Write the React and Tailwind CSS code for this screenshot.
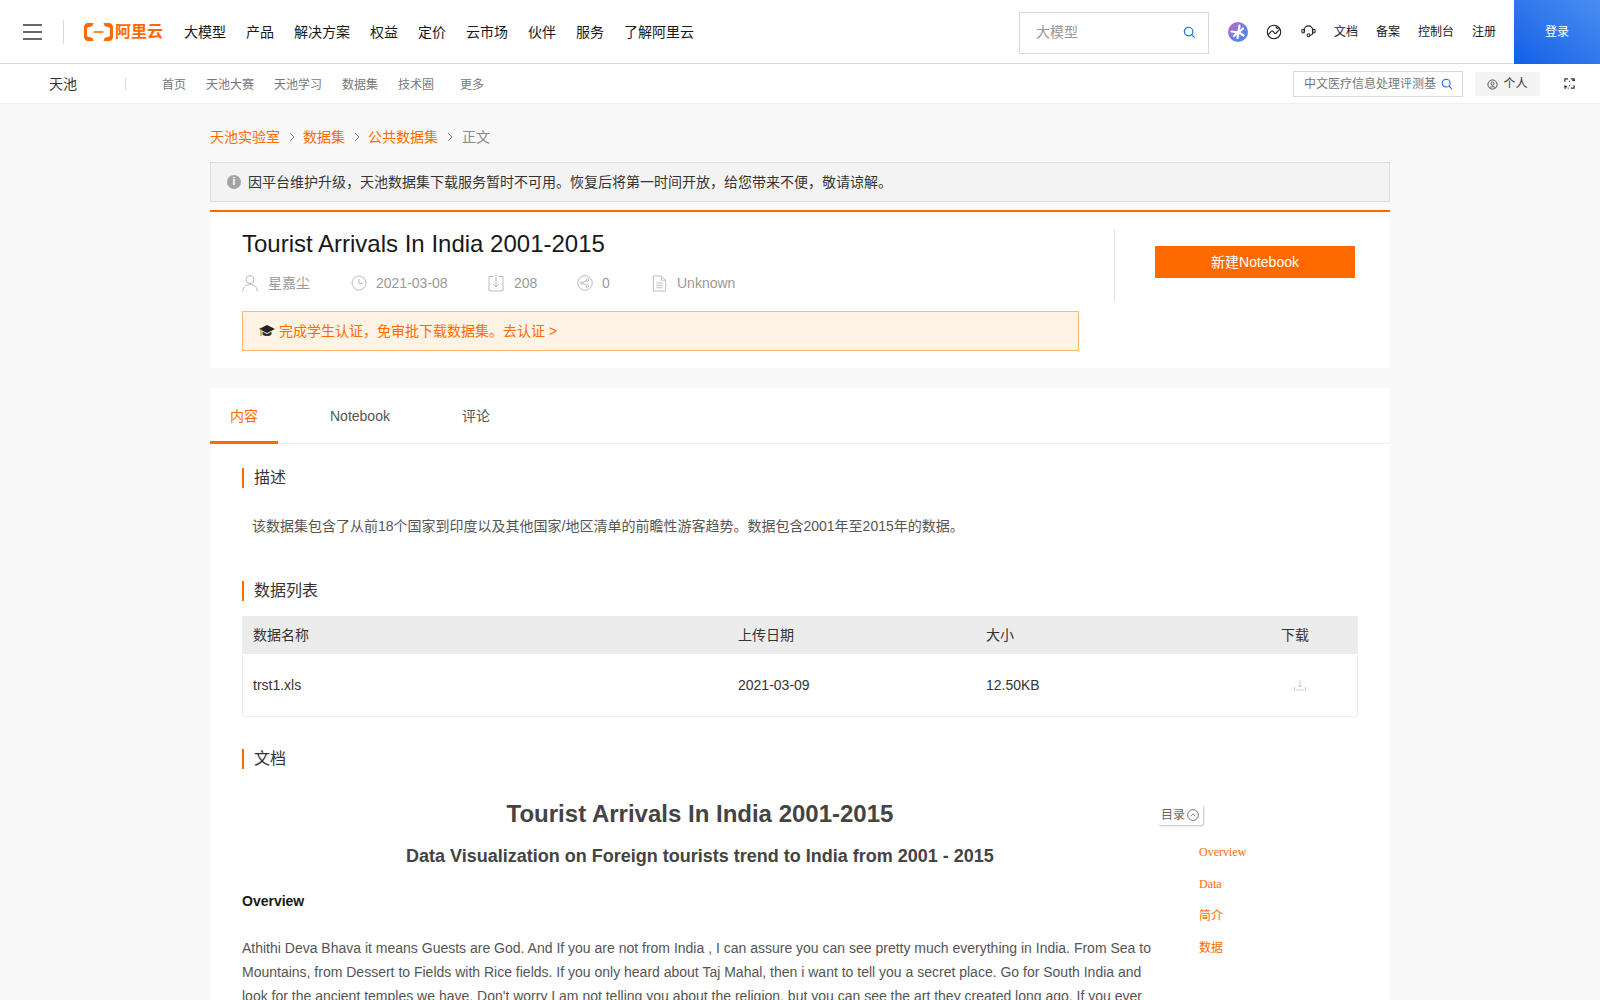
import React from 'react';

const mainNav = ['大模型', '产品', '解决方案', '权益', '定价', '云市场', '伙伴', '服务', '了解阿里云'];
const subNav = [
  ['首页', 'mr-[20px]'],
  ['天池大赛', 'mr-[20px]'],
  ['天池学习', 'mr-[20px]'],
  ['数据集', 'mr-[20px]'],
  ['技术圈', 'mr-[26px]'],
  ['更多', ''],
];
const toc = ['Overview', 'Data', '简介', '数据'];

function Search({ className }) {
  return (
    <svg viewBox="0 0 14 14" fill="none" stroke="#1366ec" strokeWidth="1.2" className={className}>
      <circle cx="6" cy="6" r="4.6" />
      <path d="M9.4 9.4 12.6 12.6" />
    </svg>
  );
}

function Chevron() {
  return (
    <svg viewBox="0 0 8 10" fill="none" stroke="#888" strokeWidth="1" className="w-[8px] h-[10px] mx-[7.5px]">
      <path d="M2 1 6 5 2 9" />
    </svg>
  );
}

function Heading({ children }) {
  return (
    <div className="flex items-center h-[20px] border-l-2 border-[#ff6a00] pl-[10px] text-[16px] leading-[20px] text-[#333]">
      {children}
    </div>
  );
}

function Logo() {
  return (
    <div className="flex items-center text-[#ff6a00]">
      <svg viewBox="0 0 29 18" className="w-[29px] h-[18px]" fill="#ff6a00">
        <path d="M9.5 0H4C1.8 0 0 1.8 0 4v10c0 2.2 1.8 4 4 4h5.500l-1.300-3.200-4-1c-.7-.2-1.200-.8-1.200-1.500V5.700c0-.7.5-1.300 1.200-1.500l4-1z" />
        <path d="M19.500 0H25c2.200 0 4 1.800 4 4v10c0 2.200-1.800 4-4 4h-5.500l1.300-3.200 4-1c.7-.2 1.200-.8 1.200-1.500V5.700c0-.7-.5-1.300-1.200-1.500l-4-1z" />
        <rect x="9.800" y="8.200" width="9.400" height="1.600" />
      </svg>
      <span className="ml-[2px] text-[16px] leading-[20px] font-bold">阿里云</span>
    </div>
  );
}

function TopBar() {
  return (
    <header className="flex items-center h-[64px] bg-white border-b border-[#d8d8d8]">
      <div className="flex flex-col justify-between w-[19px] h-[16px] ml-[23px]">
        <span className="h-[2px] bg-[#666]" />
        <span className="h-[2px] bg-[#666]" />
        <span className="h-[2px] bg-[#666]" />
      </div>
      <span className="w-px h-[24px] ml-[21px] bg-[#d8d8d8]" />
      <div className="ml-[20px]">
        <Logo />
      </div>
      <nav className="flex items-center mt-px ml-[21px] gap-[20px] text-[14px] text-[#181818]">
        {mainNav.map((n) => (
          <span key={n}>{n}</span>
        ))}
      </nav>
      <div className="flex items-center justify-between w-[190px] h-[42px] mt-[2px] ml-auto pl-[16px] pr-[12px] border border-[#d8d8d8] text-[14px] text-[#999]">
        <span>大模型</span>
        <Search className="w-[13px] h-[13px]" />
      </div>
      <span className="flex items-center justify-center w-[20px] h-[20px] ml-[19px] rounded-full bg-gradient-to-br from-[#c55fb8] via-[#6f7de6] to-[#3f8cf0]">
        <svg viewBox="0 0 20 20" className="w-[20px] h-[20px]" fill="none" stroke="#fff" strokeWidth="2.200" strokeLinecap="round">
          <path d="M11.500 3.500 9.500 16M3.500 9.500 11 10.500M11 10.500l4.500 3M11 10l4-3.500M9 11l-3 3" />
        </svg>
      </span>
      <svg viewBox="0 0 16 16" fill="none" stroke="#222" strokeWidth="1.100" className="w-[16px] h-[16px] ml-[18px]">
        <circle cx="8" cy="8" r="6.700" />
        <path d="M2 10.500c2-.5 2.500-4 4.500-3.500s1 3 3 2.500 2-3.500 4.500-4M10 2.500c0 1.500 1 2 2.500 2" />
      </svg>
      <svg viewBox="0 0 16 16" fill="none" stroke="#222" strokeWidth="1.100" className="w-[15px] h-[15px] ml-[19px]">
        <path d="M3.500 9V6.500a4.500 4.500 0 0 1 9 0V9c0 2-1.500 3-3.500 3" />
        <rect x="1" y="5.500" width="2.500" height="4" rx="1" />
        <rect x="12.500" y="5.500" width="2.500" height="4" rx="1" />
        <circle cx="8" cy="12" r="1.500" />
      </svg>
      <div className="flex items-center mt-px ml-[18px] gap-[18px] text-[12px] text-[#181818]">
        <span>文档</span>
        <span>备案</span>
        <span>控制台</span>
        <span>注册</span>
      </div>
      <div className="flex items-center justify-center self-stretch w-[86px] ml-[18px] -mb-px bg-gradient-to-tr from-[#0f5fe6] to-[#4b8df0] text-[12px] text-white">
        登录
      </div>
    </header>
  );
}

function SubBar() {
  return (
    <div className="flex items-center h-[40px] bg-white border-b border-[#eeeeee]">
      <span className="mt-px ml-[49px] text-[14px] text-[#333]">天池</span>
      <span className="w-px h-[12px] ml-[48px] bg-[#d8d8d8]" />
      <nav className="flex items-center mt-[3px] ml-[36px] text-[12px] text-[#777]">
        {subNav.map(([n, cls]) => (
          <span key={n} className={cls}>
            {n}
          </span>
        ))}
      </nav>
      <div className="flex items-center w-[170px] h-[26px] ml-auto pl-[10px] border border-[#d8d8d8] text-[12px] text-[#777]">
        <span className="overflow-hidden whitespace-nowrap w-[132px] pt-px">中文医疗信息处理评测基准</span>
        <Search className="w-[12px] h-[12px] ml-[5px]" />
      </div>
      <div className="flex items-center justify-center w-[65px] h-[24px] ml-[12px] pt-px bg-[#f4f4f4] text-[12px] text-[#333]">
        <svg viewBox="0 0 12 12" fill="none" stroke="#333" strokeWidth="0.900" className="w-[11px] h-[11px] mr-[5px]">
          <circle cx="6" cy="6" r="5" />
          <circle cx="6" cy="5" r="1.700" />
          <path d="M3 9.500c.5-1.500 5.500-1.500 6 0" />
        </svg>
        个人
      </div>
      <svg viewBox="0 0 12 12" fill="none" stroke="#333" strokeWidth="1.300" className="w-[11px] h-[11px] ml-[24px] mr-[25px]">
        <path d="M1 4V1h3.500M7.500 1H11v1.500M9 2.500h3M1 8V11h1M.5 9.500h3M11 8v3H7.500M4 11h1M6 3v1M6 8v1" />
      </svg>
    </div>
  );
}

function MetaItem({ icon, children, className }) {
  return (
    <div className={`flex items-center ${className}`}>
      {icon}
      <span>{children}</span>
    </div>
  );
}

function Summary() {
  const icon = 'w-[16px] h-[18px] mr-[10px]';
  return (
    <section className="flex h-[158px] bg-white border-t-2 border-[#ff6a00] pl-[32px]">
      <div className="w-[837px] shrink-0">
        <h1 className="mt-[16px] text-[24px] leading-[32px] text-[#181818]">Tourist Arrivals In India 2001-2015</h1>
        <div className="flex items-center h-[20px] mt-[13px] text-[14px] text-[#999]">
          <MetaItem
            className="w-[109px]"
            icon={
              <svg viewBox="0 0 16 18" fill="none" stroke="#bbb" className={icon}>
                <circle cx="8" cy="5.500" r="4" />
                <path d="M.7 17.500c0-4 3-7 7.300-7s7.300 3 7.300 7" />
              </svg>
            }
          >
            星嘉尘
          </MetaItem>
          <MetaItem
            className="w-[137px]"
            icon={
              <svg viewBox="0 0 16 16" fill="none" stroke="#bbb" className="w-[16px] h-[16px] mr-[9px]">
                <circle cx="8" cy="8" r="7" />
                <path d="M8 4v4.500h3.500" />
              </svg>
            }
          >
            2021-03-08
          </MetaItem>
          <MetaItem
            className="w-[89px]"
            icon={
              <svg viewBox="0 0 16 18" fill="none" stroke="#bbb" className={icon}>
                <path d="M5 2.500H1V17h14V2.500h-4M8 1v12M5 10l3 3 3-3" />
              </svg>
            }
          >
            208
          </MetaItem>
          <MetaItem
            className="w-[75px]"
            icon={
              <svg viewBox="0 0 16 16" fill="none" stroke="#bbb" className="w-[16px] h-[16px] mr-[9px]">
                <circle cx="8" cy="8" r="7.300" />
                <circle cx="5" cy="8" r="1.300" />
                <circle cx="10.500" cy="5" r="1.300" />
                <circle cx="10.500" cy="11" r="1.300" />
                <path d="M6.200 7.400 9.300 5.700M6.200 8.600l3.100 1.700" />
              </svg>
            }
          >
            0
          </MetaItem>
          <MetaItem
            icon={
              <svg viewBox="0 0 15 18" fill="none" stroke="#bbb" className="w-[15px] h-[17px] mr-[10px]">
                <path d="M1 1h8.500L14 5.500V17H1zM9.500 1v4.500H14M4 8.500h7M4 11h7M4 13.500h7" />
              </svg>
            }
          >
            Unknown
          </MetaItem>
        </div>
        <div className="flex items-center h-[40px] mt-[18px] pl-[16px] bg-[#fff3e6] border border-[#ffb76f] text-[14px] text-[#ff6a00]">
          <svg viewBox="0 0 16 16" className="w-[16px] h-[16px] mr-[4px]">
            <path d="M8 2 16 6 8 10 0 6z" fill="#222" />
            <path d="M3.500 8.500v3c2 2 7 2 9 0v-3L8 11z" fill="#333" />
            <path d="M2 6.500V13" stroke="#d9a520" strokeWidth="1.500" />
          </svg>
          完成学生认证，免审批下载数据集。去认证 &gt;
        </div>
      </div>
      <div className="w-[241px] h-[72px] mt-[17px] ml-[35px] pl-[40px] border-l border-[#e3e3e3]">
        <button className="w-[200px] h-[32px] mt-[17px] bg-[#ff6a00] text-[14px] text-white">新建Notebook</button>
      </div>
    </section>
  );
}

function DataTable() {
  return (
    <div className="mt-[15px] border border-[#eeeeee] text-[14px] text-[#333]">
      <div className="flex items-center h-[37px] bg-[#ececec]">
        <span className="w-[495px] pl-[10px]">数据名称</span>
        <span className="w-[248px]">上传日期</span>
        <span className="w-[295px]">大小</span>
        <span>下载</span>
      </div>
      <div className="flex items-center h-[62px] bg-white">
        <span className="w-[495px] pl-[10px]">trst1.xls</span>
        <span className="w-[248px]">2021-03-09</span>
        <span className="w-[308px]">12.50KB</span>
        <svg viewBox="0 0 12 12" fill="none" stroke="#ccc" className="w-[12px] h-[12px]">
          <path d="M6 1v7M4 6l2 2 2-2M.5 8v3h11V8" />
        </svg>
      </div>
    </div>
  );
}

function Doc() {
  return (
    <div className="flex mt-[18px]">
      <article className="w-[916px] text-[14px] leading-[24px] text-[#555]">
        <h1 className="mt-[9px] text-center text-[24px] leading-[36px] font-bold text-[#444]">
          Tourist Arrivals In India 2001-2015
        </h1>
        <h2 className="mt-[12px] text-center text-[18px] leading-[24px] font-bold text-[#444]">
          Data Visualization on Foreign tourists trend to India from 2001 - 2015
        </h2>
        <h3 className="mt-[21px] font-bold text-[#181818]">Overview</h3>
        <p className="mt-[23px] w-[910px]">
          Athithi Deva Bhava it means Guests are God. And If you are not from India , I can assure you can see pretty
          much everything in India. From Sea to Mountains, from Dessert to Fields with Rice fields. If you only heard
          about Taj Mahal, then i want to tell you a secret place. Go for South India and look for the ancient temples
          we have, Don't worry I am not telling you about the religion, but you can see the art they created long ago,
          If you ever
        </p>
      </article>
      <aside className="pt-[18px]">
        <div className="flex items-center w-[45px] h-[20px] pl-[3px] bg-white rounded-[2px] shadow-[1px_1px_2px_rgba(0,0,0,0.25)] text-[12px] text-[#666]">
          目录
          <svg viewBox="0 0 12 12" fill="none" stroke="#555" strokeWidth="0.800" className="w-[12px] h-[12px] ml-[2px]">
            <circle cx="6" cy="6" r="5.400" />
            <path d="M3.800 7 6 4.800 8.200 7" />
          </svg>
        </div>
        <ul className="ml-[41px] mt-[11px] text-[12px] leading-[32px] text-[#ff6a00] font-['Liberation_Serif','Noto_Sans_CJK_SC',serif]">
          {toc.map((t) => (
            <li key={t}>{t}</li>
          ))}
        </ul>
      </aside>
    </div>
  );
}

export default function App() {
  return (
    <div className="h-[1000px] overflow-hidden bg-[#f9f9f9] font-['Liberation_Sans','Noto_Sans_CJK_SC',sans-serif]">
      <TopBar />
      <SubBar />
      <main className="w-[1180px] ml-[210px]">
        <div className="flex items-center h-[20px] mt-[23px] text-[14px] text-[#ff6a00]">
          <span>天池实验室</span>
          <Chevron />
          <span>数据集</span>
          <Chevron />
          <span>公共数据集</span>
          <Chevron />
          <span className="ml-px text-[#888]">正文</span>
        </div>
        <div className="flex items-center h-[40px] mt-[15px] pl-[16px] bg-[#f3f3f3] border border-[#dddddd] text-[14px] text-[#333]">
          <span className="flex items-center justify-center w-[14px] h-[14px] mr-[7px] rounded-full bg-[#a3a3a3] text-[10px] font-bold leading-none text-white">
            i
          </span>
          因平台维护升级，天池数据集下载服务暂时不可用。恢复后将第一时间开放，给您带来不便，敬请谅解。
        </div>
        <div className="mt-[8px]">
          <Summary />
        </div>
        <section className="mt-[20px] bg-white">
          <div className="flex h-[56px] border-b border-[#eeeeee] text-[14px] text-[#555]">
            <span className="flex items-center justify-center w-[68px] pt-[3px] border-b-[3px] border-[#ff6a00] -mb-px text-[#ff6a00]">
              内容
            </span>
            <span className="flex items-center ml-[52px] pt-[2px]">Notebook</span>
            <span className="flex items-center ml-[72px] pt-[2px]">评论</span>
          </div>
          <div className="px-[32px] pt-[24px]">
            <Heading>描述</Heading>
            <p className="mt-[27px] pl-[10px] text-[14px] leading-[22px] text-[#555]">
              该数据集包含了从前18个国家到印度以及其他国家/地区清单的前瞻性游客趋势。数据包含2001年至2015年的数据。
            </p>
            <div className="mt-[44px]">
              <Heading>数据列表</Heading>
            </div>
            <DataTable />
            <div className="mt-[32px]">
              <Heading>文档</Heading>
            </div>
            <Doc />
          </div>
        </section>
      </main>
    </div>
  );
}
